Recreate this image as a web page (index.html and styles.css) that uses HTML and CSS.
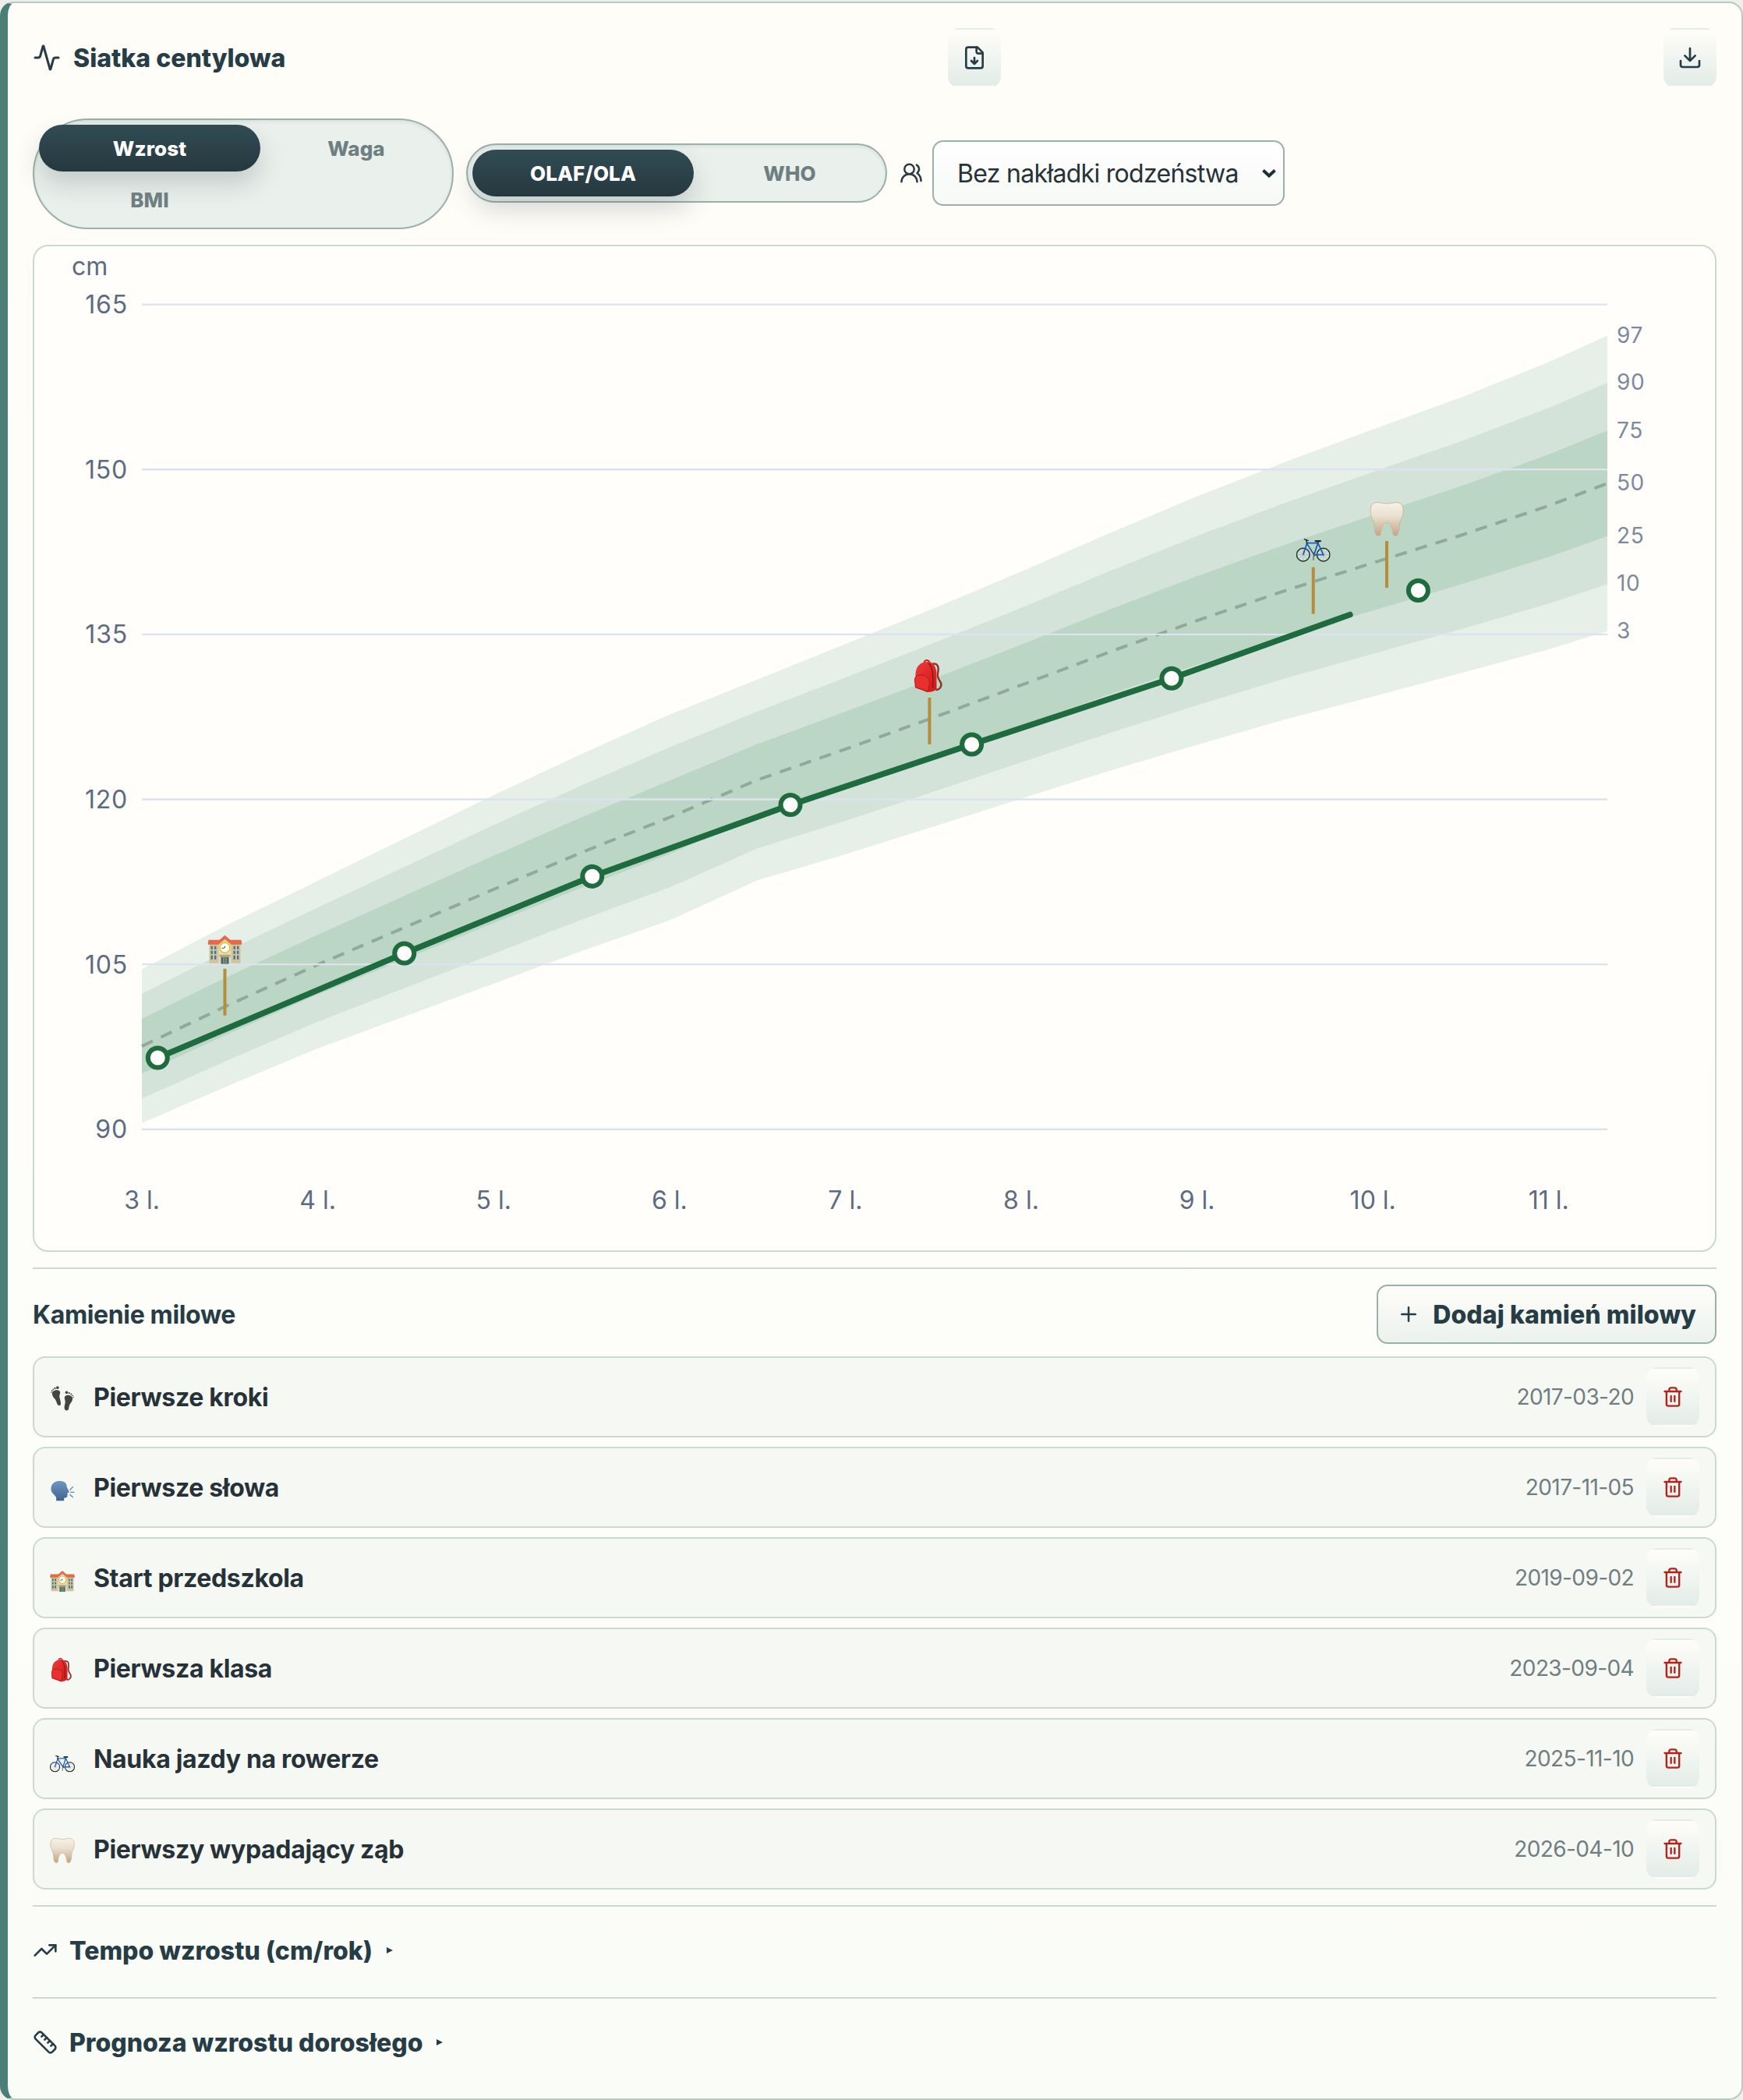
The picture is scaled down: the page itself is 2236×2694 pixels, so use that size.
FILE: index.html
```html
<!DOCTYPE html>
<html lang="pl">

<head>
    <meta charset="UTF-8">
    <meta name="viewport" content="width=device-width, initial-scale=1.0">
    <title>Siatka centylowa</title>
    <link rel="stylesheet" href="styles.css">
</head>

<body>
    <svg class="sprite" width="0" height="0">
        <defs>
            <linearGradient id="gTooth" x1="0" y1="0" x2="0" y2="1">
                <stop offset="0" stop-color="#f6f2e6" />
                <stop offset="0.4" stop-color="#e9e1d1" />
                <stop offset="1" stop-color="#c4a283" />
            </linearGradient>
            <linearGradient id="gHead" x1="0" y1="0" x2="0" y2="1">
                <stop offset="0" stop-color="#7096c4" />
                <stop offset="1" stop-color="#40648f" />
            </linearGradient>
            <linearGradient id="gRed" x1="0" y1="0" x2="1" y2="1">
                <stop offset="0" stop-color="#ee3b38" />
                <stop offset="1" stop-color="#cf1717" />
            </linearGradient>
        </defs>
        <symbol id="e-school" viewBox="0 0 44 44">
            <path fill="#cfc59c" d="M2 18h40v25H2z" />
            <path fill="#e6dcb2" d="M14 15l8-6 8 6v28H14z" />
            <path fill="#e8694a" d="M1 13h14l7-6 7 6h14l1 6H30l-8-7-8 7H0z" />
            <g fill="#4d7193">
                <path d="M4 21h2.400v4H4zM8.500 21h2.400v4H8.500zM4 27h2.400v4H4zM8.500 27h2.400v4H8.500zM4 33h2.400v5H4zM8.500 33h2.400v5H8.500z" />
                <path d="M33 21h2.400v4H33zM37.500 21h2.400v4H37.500zM33 27h2.400v4H33zM37.500 27h2.400v4H37.500zM33 33h2.400v5H33zM37.500 33h2.400v5H37.500z" />
            </g>
            <circle cx="22" cy="23" r="6.500" fill="#fff" stroke="#dfc12f" stroke-width="1.500" />
            <path d="M22 21v2l-4 1" stroke="#444" fill="none" />
            <path fill="#b3a97e" d="M15 32h14v3H15z" />
            <path fill="#3f6885" d="M17 35h10v9H17z" />
            <path d="M20.500 35v9M23.500 35v9" stroke="#d2b348" />
        </symbol>
        <symbol id="e-bag" viewBox="0 0 44 44">
            <path d="M25 7c7-2 9 3 8 9-1 7-1 8 3 14 3 5-1 10-6 10" fill="none" stroke="#8e3428" stroke-width="2.400" />
            <path d="M15 5c1-4 6-4 7 0" fill="none" stroke="#d32222" stroke-width="2" />
            <path fill="url(#gRed)" d="M4 19C5 7 13 4 20 4c8 0 11 8 11 17v18c-3 3-8 4-12 4L4 37z" />
            <path fill="#e8302e" stroke="#b61616" d="M3 27c0-5 5-7 10-6 6 1 9 5 9 11l-2 10L4 37z" />
            <path d="M21 6c5 5 6 13 5 31" fill="none" stroke="#8b1717" stroke-width="1.500" />
        </symbol>
        <symbol id="e-bike" viewBox="0 0 44 44">
            <g fill="none">
                <circle cx="9" cy="34" r="8.300" stroke="#24272a" stroke-width="1.500" fill="#fff" fill-opacity=".25" />
                <circle cx="35" cy="34" r="8.300" stroke="#24272a" stroke-width="1.500" fill="#fff" fill-opacity=".25" />
                <path d="M1 34h16M9 26v16M3 28l12 12M3 40l12-12M27 34h16M35 26v16M29 28l12 12M29 40l12-12" stroke="#9aa5a5" stroke-width=".5" />
                <path d="M9 34l5-15h14L23 34 14 20M23 34h12l-7-15" stroke="#1c5fbd" stroke-width="1.800" />
                <path d="M14 20l-1-5-3-1M10 14l6 2M28 19v-3" stroke="#24272a" stroke-width="1.500" />
                <path d="M24 16.500h8" stroke="#24272a" stroke-width="2.400" />
                <path d="M23 31l-1 10M22 35h3" stroke="#555" stroke-width="1.200" />
            </g>
        </symbol>
        <symbol id="e-tooth" viewBox="0 0 44 44">
            <path fill="url(#gTooth)" stroke="#cbb99f" stroke-width="1" d="M1 11C1 3 5 .5 10 .5c5 0 7 1.500 12 1.500S30 .5 34 .5c6 0 9 3.500 9 10.500 0 7-2 9-4 14-1 4 0 9-2 14-1 4-2 4.500-4 4.500-4 0-3-6-5-11-1-4-3-6-6-6s-5 2-6 6c-2 5-1 11-4 11-3 0-4-1.500-5-4.500-1-5 0-10-2-14C3 20 1 17 1 11z" />
        </symbol>
        <symbol id="e-feet" viewBox="0 0 44 44">
            <g fill="#464443">
                <path d="M4 13c0-5 9-8 13-4 3 3-1 7 0 11 1 5 3 9 2 13-1 2-5 2-6-1-2-6-3-8-6-11-2-3-3-5-3-8z" />
                <circle cx="13.500" cy="3" r="2.500" /><circle cx="9" cy="4" r="1.500" /><circle cx="6" cy="6" r="1.300" /><circle cx="3.600" cy="8.500" r="1.200" /><circle cx="2.500" cy="11.500" r="1" />
                <path d="M40 22c0-5-9-8-13-4-3 3 1 8 0 12s-2 6-1 11c1 3 6 3 7 0 1-5 1-8 4-11 2-3 3-5 3-8z" />
                <circle cx="29.500" cy="11.500" r="2.500" /><circle cx="34" cy="12.500" r="1.500" /><circle cx="37.500" cy="14.500" r="1.300" /><circle cx="40" cy="17" r="1.200" /><circle cx="41.500" cy="20" r="1" />
            </g>
        </symbol>
        <symbol id="e-talk" viewBox="0 0 44 44">
            <path fill="url(#gHead)" d="M2 22C2 13 9 8 17 8c8 0 13 4 13 11l4 8c0 2-2 2-3 2v5c0 3-3 4-6 4v5H11c1-6 0-7-4-11-3-3-5-6-5-10z" />
            <path d="M35 24l6-6M36 28h7M35 32l6 5" stroke="#5c86b4" stroke-width="1.800" />
        </symbol>
        <symbol id="i-trash" viewBox="0 0 24 24">
            <path d="M3 6h18M19 6v14a2 2 0 0 1-2 2H7a2 2 0 0 1-2-2V6M8 6V4a2 2 0 0 1 2-2h4a2 2 0 0 1 2 2v2M10 11v6M14 11v6" />
        </symbol>
    </svg>

    <section class="card">
        <header class="card-head">
            <h2 class="title">
                <svg class="icon icon-36" viewBox="0 0 24 24"><path d="M22 12h-2.480a2 2 0 0 0-1.930 1.460l-2.350 8.360a.25.25 0 0 1-.48 0L9.240 2.180a.25.25 0 0 0-.48 0l-2.350 8.360A2 2 0 0 1 4.490 12H2" /></svg>
                <span>Siatka centylowa</span>
            </h2>
            <button class="icon-btn">
                <svg class="icon icon-32" viewBox="0 0 24 24"><path d="M15 2H6a2 2 0 0 0-2 2v16a2 2 0 0 0 2 2h12a2 2 0 0 0 2-2V7z" /><path d="M14 2v4a2 2 0 0 0 2 2h4M12 18v-6M9 15l3 3 3-3" /></svg>
            </button>
            <button class="icon-btn">
                <svg class="icon icon-32" viewBox="0 0 24 24"><path d="M21 15v4a2 2 0 0 1-2 2H5a2 2 0 0 1-2-2v-4M7 10l5 5 5-5M12 15V3" /></svg>
            </button>
        </header>

        <div class="controls">
            <div class="segmented">
                <button class="seg active">Wzrost</button>
                <button class="seg">Waga</button>
                <button class="seg">BMI</button>
            </div>
            <div class="segmented source">
                <button class="seg active">OLAF/OLA</button>
                <button class="seg">WHO</button>
            </div>
            <div class="sibling">
                <svg class="icon icon-30" viewBox="0 0 24 24"><path d="M18 21a8 8 0 0 0-16 0" /><circle cx="10" cy="8" r="5" /><path d="M22 20c0-3.370-2-6.500-4-8a5 5 0 0 0-.45-8.300" /></svg>
                <div class="select">
                    <span>Bez nakładki rodzeństwa</span>
                    <svg class="chevron" viewBox="0 0 20 12"><path d="M2.500 2.500L10 9.500l7.500-7" /></svg>
                </div>
            </div>
        </div>

        <div class="chart-box">
            <svg id="chart" class="chart" viewBox="0 0 2156 1288"></svg>
        </div>

        <section class="milestones">
            <div class="ms-head">
                <h3>Kamienie milowe</h3>
                <button class="add-btn">
                    <svg class="icon icon-30" viewBox="0 0 24 24"><path d="M5 12h14M12 5v14" /></svg>
                    <span>Dodaj kamień milowy</span>
                </button>
            </div>
            <ul class="ms-list">
                <li>
                    <svg class="emoji"><use href="#e-feet" /></svg>
                    <span class="name">Pierwsze kroki</span>
                    <span class="date">2017-03-20</span>
                    <button class="icon-btn danger"><svg class="icon icon-28"><use href="#i-trash" /></svg></button>
                </li>
                <li>
                    <svg class="emoji"><use href="#e-talk" /></svg>
                    <span class="name">Pierwsze słowa</span>
                    <span class="date">2017-11-05</span>
                    <button class="icon-btn danger"><svg class="icon icon-28"><use href="#i-trash" /></svg></button>
                </li>
                <li>
                    <svg class="emoji"><use href="#e-school" /></svg>
                    <span class="name">Start przedszkola</span>
                    <span class="date">2019-09-02</span>
                    <button class="icon-btn danger"><svg class="icon icon-28"><use href="#i-trash" /></svg></button>
                </li>
                <li>
                    <svg class="emoji"><use href="#e-bag" /></svg>
                    <span class="name">Pierwsza klasa</span>
                    <span class="date">2023-09-04</span>
                    <button class="icon-btn danger"><svg class="icon icon-28"><use href="#i-trash" /></svg></button>
                </li>
                <li>
                    <svg class="emoji"><use href="#e-bike" /></svg>
                    <span class="name">Nauka jazdy na rowerze</span>
                    <span class="date">2025-11-10</span>
                    <button class="icon-btn danger"><svg class="icon icon-28"><use href="#i-trash" /></svg></button>
                </li>
                <li>
                    <svg class="emoji"><use href="#e-tooth" /></svg>
                    <span class="name">Pierwszy wypadający ząb</span>
                    <span class="date">2026-04-10</span>
                    <button class="icon-btn danger"><svg class="icon icon-28"><use href="#i-trash" /></svg></button>
                </li>
            </ul>
        </section>

        <div class="fold">
            <svg class="icon icon-32" viewBox="0 0 24 24"><path d="M22 7l-8.500 8.500-5-5L2 17" /><path d="M16 7h6v6" /></svg>
            <h3>Tempo wzrostu (cm/rok)</h3>
            <i class="caret"></i>
        </div>
        <div class="fold">
            <svg class="icon icon-32" viewBox="0 0 24 24"><path d="M21.300 15.300a2.400 2.400 0 0 1 0 3.400l-2.600 2.600a2.400 2.400 0 0 1-3.400 0L2.700 8.700a2.410 2.410 0 0 1 0-3.400l2.600-2.600a2.410 2.410 0 0 1 3.400 0z" /><path d="M14.500 12.500l2-2M11.500 9.500l2-2M8.500 6.500l2-2M17.500 15.500l2-2" /></svg>
            <h3>Prognoza wzrostu dorosłego</h3>
            <i class="caret"></i>
        </div>
    </section>
    <script src="chart.js"></script>
</body>

</html>
```
FILE: styles.css
```css
* {
    box-sizing: border-box;
    margin: 0;
    padding: 0;
}

body {
    padding-top: 2px;
    background-color: #eeefea;
    font-family: Inter, "Liberation Sans", sans-serif;
    font-size: 32px;
    color: #263d45;
}

button {
    font-family: inherit;
    color: inherit;
}

.sprite {
    position: absolute;
}

.card {
    height: 2692px;
    padding: 32px;
    border: 2px solid #b9c9c4;
    border-left: 10px solid #4a7e76;
    border-radius: 18px;
    background: linear-gradient(180deg, #fffdf8, #fdfdfa 70%, #fafcf8);
}

/* icons */
.icon {
    flex: none;
    fill: none;
    stroke: currentColor;
    stroke-width: 2;
    stroke-linecap: round;
    stroke-linejoin: round;
}

.icon-28 {
    width: 28px;
    height: 28px;
}

.icon-30 {
    width: 30px;
    height: 30px;
}

.icon-32 {
    width: 32px;
    height: 32px;
}

.icon-36 {
    width: 36px;
    height: 36px;
}

.icon-btn {
    display: flex;
    align-items: center;
    justify-content: center;
    width: 68px;
    height: 76px;
    border: 2px solid transparent;
    border-radius: 14px;
    background: linear-gradient(180deg, #fffdf9, #e2ece8);
}

/* header */
.card-head {
    display: flex;
    align-items: center;
    justify-content: space-between;
    height: 76px;
}

.title {
    display: flex;
    align-items: center;
    gap: 16px;
    font-size: 32px;
    font-weight: 800;
}

/* switches */
.controls {
    display: flex;
    align-items: center;
    gap: 16px;
    margin-top: 40px;
}

.segmented {
    display: grid;
    grid-template-columns: 284px 234px;
    gap: 6px;
    width: 540px;
    padding: 6px;
    border: 2px solid #9ab0aa;
    border-radius: 999px;
    background-color: #eaf0ec;
    box-shadow: inset 0 2px 4px rgba(38, 61, 69, 0.08);
}

.source,
.sibling {
    margin-bottom: 2px;
}

.seg {
    height: 60px;
    border: 0;
    border-radius: 30px;
    background: none;
    font-size: 26px;
    font-weight: 800;
    letter-spacing: 0.1px;
    color: #6f7e80;
}

.seg.active {
    color: #fff;
    background: linear-gradient(180deg, #314c54, #26383f);
    box-shadow: 0 16px 32px rgba(38, 61, 69, 0.2);
}

.sibling {
    display: flex;
    align-items: center;
    gap: 12px;
}

.select {
    display: flex;
    align-items: center;
    justify-content: space-between;
    width: 452px;
    height: 84px;
    padding: 0 8px 0 30px;
    border: 2px solid #9ab0aa;
    border-radius: 14px;
    background: linear-gradient(180deg, #fff, #f6f9f6);
    letter-spacing: -0.7px;
    color: #263238;
}

.chevron {
    width: 20px;
    height: 12px;
    fill: none;
    stroke: #1f2f36;
    stroke-width: 4;
}

/* chart */
.chart-box {
    height: 1292px;
    margin-top: 20px;
    border: 2px solid #cbd9d4;
    border-radius: 20px;
    background-color: #fffefa;
}

.chart {
    display: block;
    width: 100%;
    height: 100%;
}

.grid {
    stroke: #dde3ec;
    stroke-width: 2.4;
}

.axis {
    font-size: 32px;
    fill: #5c6b82;
}

.axis-y {
    letter-spacing: 0.8px;
}

.pct {
    font-size: 28px;
    letter-spacing: 0.6px;
    fill: #7d899c;
}

.median {
    fill: none;
    stroke: #90a99c;
    stroke-width: 4;
    stroke-dasharray: 15.4 11.6;
}

.child-line {
    fill: none;
    stroke: #1f6b40;
    stroke-width: 7.6;
    stroke-linecap: round;
    stroke-linejoin: round;
}

.child-dot {
    fill: #fffefa;
    stroke: #1f6b40;
    stroke-width: 6;
}

.pin {
    stroke: #b58d3c;
    stroke-width: 4;
}

/* milestones */
.milestones,
.fold {
    margin-top: 20px;
    border-top: 2px solid #cbd9d4;
}

.ms-head {
    display: flex;
    align-items: center;
    justify-content: space-between;
    margin-top: 20px;
}

h3 {
    font-size: 32px;
    font-weight: 700;
    letter-spacing: -0.35px;
}

.add-btn {
    display: flex;
    align-items: center;
    gap: 16px;
    height: 76px;
    padding: 0 24px;
    border: 2px solid #9ab0aa;
    border-radius: 14px;
    background: linear-gradient(180deg, #fffdf9, #ebf2ee);
    font-size: 32px;
    font-weight: 800;
    letter-spacing: 0.1px;
}

.ms-list {
    display: flex;
    flex-direction: column;
    gap: 12px;
    margin-top: 16px;
    list-style: none;
}

.ms-list li {
    display: flex;
    align-items: center;
    height: 104px;
    padding: 0 20px;
    border: 2px solid #cbd9d4;
    border-radius: 16px;
    background-color: #f6f8f4;
}

.emoji {
    width: 32px;
    height: 32px;
    margin-top: 4px;
}

.name {
    margin-left: 24px;
    font-weight: 700;
    letter-spacing: -0.33px;
    color: #263238;
}

.date {
    margin: 0 16px 0 auto;
    font-size: 28px;
    letter-spacing: -0.6px;
    color: #6f7e80;
}

.danger {
    color: #b5221a;
}

.fold {
    display: flex;
    align-items: center;
    height: 118px;
    padding-bottom: 4px;
}

.fold + .fold {
    margin-top: 0;
}

.fold h3 {
    margin: 0 18px 0 15px;
    font-weight: 800;
    letter-spacing: 0;
}

.caret {
    border: 4.5px solid transparent;
    border-left: 8px solid #263d45;
    border-right: 0;
}
```
FILE: chart.js
```js
var svg = document.getElementById("chart");
var NS = "http://www.w3.org/2000/svg";

// half-year steps from 3 years, last entry is the right edge of the plot
var p97 = [104.55, 108.7, 112.59, 116.49, 120.39, 124.13, 127.71, 130.9, 134.13, 137.35, 140.71, 144.18, 147.56, 150.68, 153.65, 156.54, 159.76, 162.17];
var p3 = [90.57, 94.02, 97.36, 100.3, 103.24, 106.21, 109, 112.64, 115, 117.52, 120.07, 122.59, 124.96, 127.27, 129.36, 131.48, 133.64, 135.3];
var lastAge = 11.333;

var points = [[3.09, 96.5], [4.4925, 106], [5.561, 113], [6.688, 119.5], [7.719, 125], [8.855, 131], [10.258, 139]];
var lineEnd = [9.87, 136.8];

var pins = [
    { age: 3.472, cm: 100.35, icon: "e-school" },
    { age: 7.479, cm: 125, icon: "e-bag" },
    { age: 9.661, cm: 136.86, icon: "e-bike" },
    { age: 10.079, cm: 139.24, icon: "e-tooth" }
];

function x(age) {
    return 138 + (age - 3) * 225.6;
}

function y(cm) {
    return 74.6 + (165 - cm) * 14.109;
}

function add(tag, attrs, text) {
    var el = document.createElementNS(NS, tag);
    for (var k in attrs) {
        el.setAttribute(k, attrs[k]);
    }
    if (text) {
        el.textContent = text;
    }
    svg.appendChild(el);
}

// z: share of the distance median -> outer percentile, from -1 (3rd) to 1 (97th)
function curve(z) {
    return p97.map(function(top, i) {
        var age = i == p97.length - 1 ? lastAge : 3 + i / 2;
        var mid = (top + p3[i]) / 2;
        return [x(age), y(mid + z * (top - p3[i]) / 2)];
    });
}

function band(z, color) {
    var pts = curve(z).concat(curve(-z).reverse());
    add("polygon", { points: pts.join(" "), fill: color });
}

band(1, "#e6efe8");
band(0.681, "#d3e3d9");
band(0.357, "#bbd6c5");
add("polyline", { points: curve(0).join(" "), "class": "median" });

for (var cm = 90; cm <= 165; cm += 15) {
    add("line", { x1: 138, x2: 2018, y1: y(cm), y2: y(cm), "class": "grid" });
    add("text", { x: 120, y: y(cm) + 11.4, "text-anchor": "end", "class": "axis axis-y" }, String(cm));
}
add("text", { x: 48, y: 37, "class": "axis" }, "cm");

for (var age = 3; age <= 11; age++) {
    add("text", { x: x(age), y: 1235, "text-anchor": "middle", "class": "axis" }, age + " l.");
}

[[97, 1], [90, 0.681], [75, 0.357], [50, 0], [25, -0.357], [10, -0.681], [3, -1]].forEach(function(p) {
    var end = curve(p[1]).pop();
    add("text", { x: 2030, y: end[1] + 9.2, "class": "pct" }, String(p[0]));
});

var line = points.slice(0, -1).concat([lineEnd]).map(function(p) {
    return [x(p[0]), y(p[1])];
});
add("polyline", { points: line.join(" "), "class": "child-line" });

pins.forEach(function(p) {
    var px = x(p.age);
    var py = y(p.cm);
    add("line", { x1: px, x2: px, y1: py - 60, y2: py, "class": "pin" });
    add("use", { href: "#" + p.icon, x: px - 22, y: py - 110, width: 44, height: 44 });
});

points.forEach(function(p) {
    add("circle", { cx: x(p[0]), cy: y(p[1]), r: 12.5, "class": "child-dot" });
});
```
